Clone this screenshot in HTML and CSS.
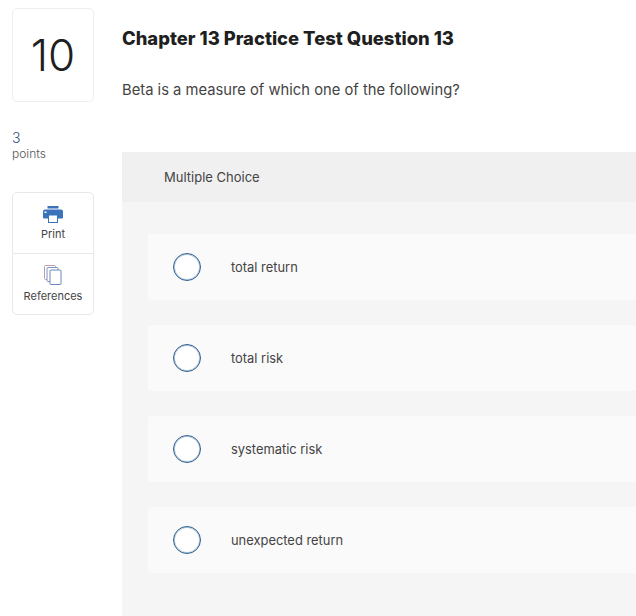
FILE: index.html
```html
<!DOCTYPE html>
<html lang="en">
<head>
    <meta charset="UTF-8">
    <title>Chapter 13 Practice Test Question 13</title>
    <link rel="stylesheet" href="styles.css">
</head>
<body>
    <div class="page">
        <aside class="side">
            <div class="num">10</div>
            <p class="points"><span>3</span>points</p>
            <ul class="tools">
                <li>
                    <svg width="20" height="17" viewBox="0 0 20 17">
                        <rect x="4.500" y="0" width="11" height="2.500" fill="#3b73bb"/>
                        <path d="M2 3.500h16a2 2 0 0 1 2 2v6a1 1 0 0 1-1 1H1a1 1 0 0 1-1-1v-6a2 2 0 0 1 2-2z" fill="#3b73bb"/>
                        <rect x="1.500" y="5.500" width="2" height="1.500" fill="#fff"/>
                        <rect x="5.500" y="9" width="9" height="7.500" fill="#fff" stroke="#3b73bb"/>
                    </svg>
                    <span>Print</span>
                </li>
                <li>
                    <svg width="18" height="20" viewBox="0 0 18 20">
                        <rect x="0.500" y="0.500" width="11" height="14" rx="1" fill="#fff" stroke="#b9a0a8"/>
                        <rect x="3" y="2.500" width="11" height="14" rx="1" fill="#fff" stroke="#7d94c0"/>
                        <rect x="6" y="5" width="11" height="14.500" rx="1" fill="#fff" stroke="#6a86c0"/>
                    </svg>
                    <span>References</span>
                </li>
            </ul>
        </aside>

        <main class="content">
            <h1>Chapter 13 Practice Test Question 13</h1>
            <p class="question">Beta is a measure of which one of the following?</p>

            <section class="panel">
                <div class="panel-head">Multiple Choice</div>
                <ul class="options">
                    <li><i class="radio"></i>total return</li>
                    <li><i class="radio"></i>total risk</li>
                    <li><i class="radio"></i>systematic risk</li>
                    <li><i class="radio"></i>unexpected return</li>
                </ul>
            </section>
        </main>
    </div>
</body>
</html>
```

FILE: styles.css
```css
* {
    margin:0;
    padding:0;
    box-sizing:border-box;
}

html, body {
    height:616px;
    overflow:hidden;
    background:#fff;
}

body {
    font-family:"Inter", "Liberation Sans", sans-serif;
    color:#2b2b2b;
}

ul, li {
    list-style:none;
}

.page {
    display:flex;
    height:616px;
    padding:8px 0 0 12px;
}

.side {
    width:82px;
    flex-shrink:0;
}

.num {
    display:flex;
    align-items:center;
    justify-content:center;
    height:94px;
    border:1px solid #eee;
    border-radius:5px;
    font-size:44px;
    font-weight:300;
    color:#1f1f1f;
}

.points {
    margin-top:27px;
    font-size:12px;
    line-height:16px;
    font-weight:300;
    color:#555;
}

.points span {
    display:block;
    font-size:14px;
    line-height:17px;
    color:#2f4f7f;
}

.tools {
    margin-top:30px;
    border:1px solid #e8e8e8;
    border-radius:5px;
}

.tools li {
    display:flex;
    flex-direction:column;
    align-items:center;
    height:60px;
    padding-top:11px;
    font-size:11px;
    color:#444;
}

.tools li:first-child {
    height:61px;
    padding-top:13px;
    border-bottom:1px solid #e8e8e8;
}

.tools span {
    margin-top:4px;
}

.content {
    flex:1;
    min-width:0;
    margin-left:28px;
}

h1 {
    margin-top:18px;
    font-size:18.400px;
    line-height:24px;
    font-weight:800;
    color:#1f1f1f;
}

.question {
    margin-top:30px;
    font-size:14.750px;
    line-height:20px;
    color:#444;
}

.panel {
    margin-top:52px;
    height:464px;
    background:#f5f5f5;
    border-radius:3px 0 0 0;
}

.panel-head {
    height:50px;
    padding-left:42px;
    background:#f0f0f0;
    font-size:13px;
    line-height:50px;
    color:#444;
}

.options {
    display:flex;
    flex-direction:column;
    gap:25px;
    padding:32px 0 0 26px;
}

.options li {
    display:flex;
    align-items:center;
    height:66px;
    padding-left:25px;
    background:#fafafa;
    border-radius:3px 0 0 3px;
    font-size:12.900px;
    color:#444;
}

.radio {
    width:28px;
    height:28px;
    margin-right:30px;
    border:1px solid #2f5f8f;
    border-radius:50%;
    background:#fff;
    box-shadow:inset 0 0 0 1px #b4c8db;
}
```
